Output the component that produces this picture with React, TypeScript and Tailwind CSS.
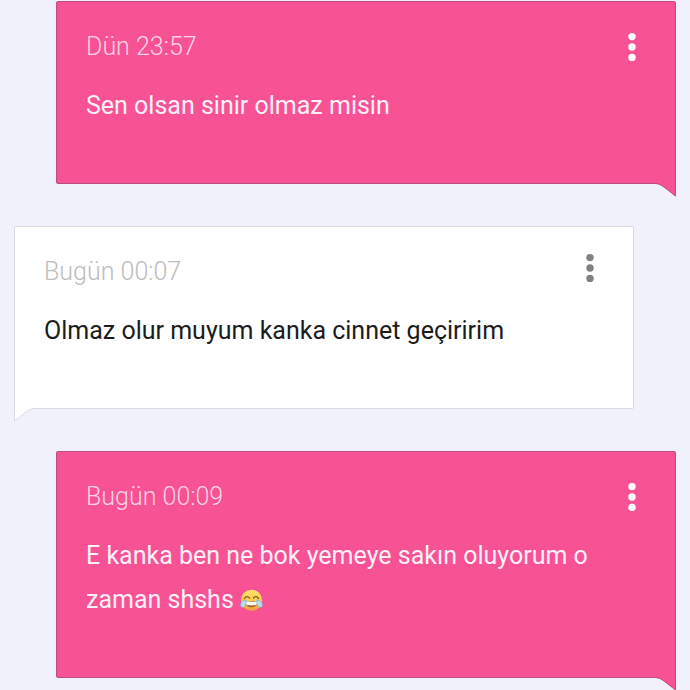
import React from 'react';
import clsx from 'clsx';

type Message = {
    time: string;
    text: string;
    mine: boolean;
    laugh?: boolean;
};

const messages: Message[] = [
    { time: "Dün 23:57", text: "Sen olsan sinir olmaz misin", mine: true },
    { time: "Bugün 00:07", text: "Olmaz olur muyum kanka cinnet geçiririm", mine: false },
    { time: "Bugün 00:09", text: "E kanka ben ne bok yemeye sakın oluyorum o zaman shshs", mine: true, laugh: true }
];

const Dots = () => (
    <svg width="8" height="30" viewBox="0 0 8 30" fill="currentColor" aria-hidden="true">
        <circle cx="4" cy="4.6" r="3.7" />
        <circle cx="4" cy="15" r="3.7" />
        <circle cx="4" cy="25.4" r="3.7" />
    </svg>
);

const JoyEmoji = () => (
    <svg className="inline-block align-[-4px]" width="23" height="23" viewBox="0 0 24 24" role="img" aria-label="😂">
        <defs>
            <linearGradient id="face" x1="0" y1="0" x2="0" y2="1">
                <stop offset="0" stopColor="#fce36a" />
                <stop offset="0.6" stopColor="#fac94a" />
                <stop offset="1" stopColor="#f3983e" />
            </linearGradient>
        </defs>
        <circle cx="12" cy="11.8" r="11" fill="url(#face)" />
        <path d="M4.600 10 Q7.200 6.400 10 9.400 M14 9.400 Q16.800 6.400 19.400 10" fill="none" stroke="#8a5524" strokeWidth="1.300" strokeLinecap="round" />
        <path d="M5.400 12.400 Q12 13.200 18.600 12.400 Q18 19 12 19 Q6 19 5.400 12.400Z" fill="#9a5c28" />
        <path d="M5.800 12.900 Q12 13.700 18.200 12.900 Q17.800 16 16.800 16.800 Q12 17.600 7.200 16.800 Q6.200 16 5.800 12.900Z" fill="#fffaf0" />
        <path d="M6.600 11.600 C3 11.600 0.400 14 0.600 17 C0.800 19.600 4.200 20 5.400 17.600 C6.200 16 6.400 14 6.600 11.600Z" fill="#b5def0" stroke="#68abd0" strokeWidth="0.6" />
        <path d="M17.400 11.600 C21 11.600 23.600 14 23.400 17 C23.200 19.600 19.800 20 18.600 17.600 C17.800 16 17.600 14 17.400 11.600Z" fill="#b5def0" stroke="#68abd0" strokeWidth="0.6" />
    </svg>
);

// Speech tail, drawn pointing down-right; flipped for incoming messages
const Tail = ({ mine }: { mine: boolean }) => (
    <svg
        className={clsx("absolute top-full", mine ? "-right-px" : "-left-px -scale-x-100")}
        width="22"
        height="14"
        viewBox="0 0 22 14"
        aria-hidden="true"
    >
        <path d="M0 -1 H22 V13.6 L10 4 Q5.500 0.500 0 0Z" fill={mine ? "#f75293" : "#ffffff"} />
        <path
            d="M0 0.500 H2 Q6 0.700 10 4 L21.500 13 V-1"
            fill="none"
            stroke={mine ? "#bd4c80" : "#d9dade"}
        />
    </svg>
);

const Bubble = ({ time, text, mine, laugh }: Message) => (
    <article
        className={clsx(
            "relative rounded-t-xs border px-[29px] pt-[29px] pb-[55px]",
            mine
                ? "ml-[42px] rounded-bl-xs border-[#bd4c80] bg-[#f75293] text-[#fff0f8]"
                : "mr-[42px] rounded-br-xs border-[#d9dade] bg-white text-[#1c1c1c]"
        )}
    >
        <header className="flex h-8 items-center justify-between">
            <time className={clsx("text-[25px] leading-8 font-light", mine ? "text-[#fdd3e6]" : "text-[#bdbdbd]")}>
                {time}
            </time>
            <button
                type="button"
                aria-label="Mesaj seçenekleri"
                className={clsx("-m-2 mr-0.5 p-2", mine ? "text-white" : "pb-4 text-[#808080]")}
            >
                <Dots />
            </button>
        </header>
        <p className="mt-[21px] text-[25px] leading-[44px]">
            {text}
            {laugh && <> <JoyEmoji /></>}
        </p>
        <Tail mine={mine} />
    </article>
);

const App = () => {
    return (
        <main className="flex min-h-screen flex-col gap-[42px] overflow-hidden bg-[#f0f1fa] px-3.5 pt-px pb-10 font-['Roboto',sans-serif]">
            {messages.map((message) => (
                <Bubble key={message.time} {...message} />
            ))}
        </main>
    );
};

export default App;
